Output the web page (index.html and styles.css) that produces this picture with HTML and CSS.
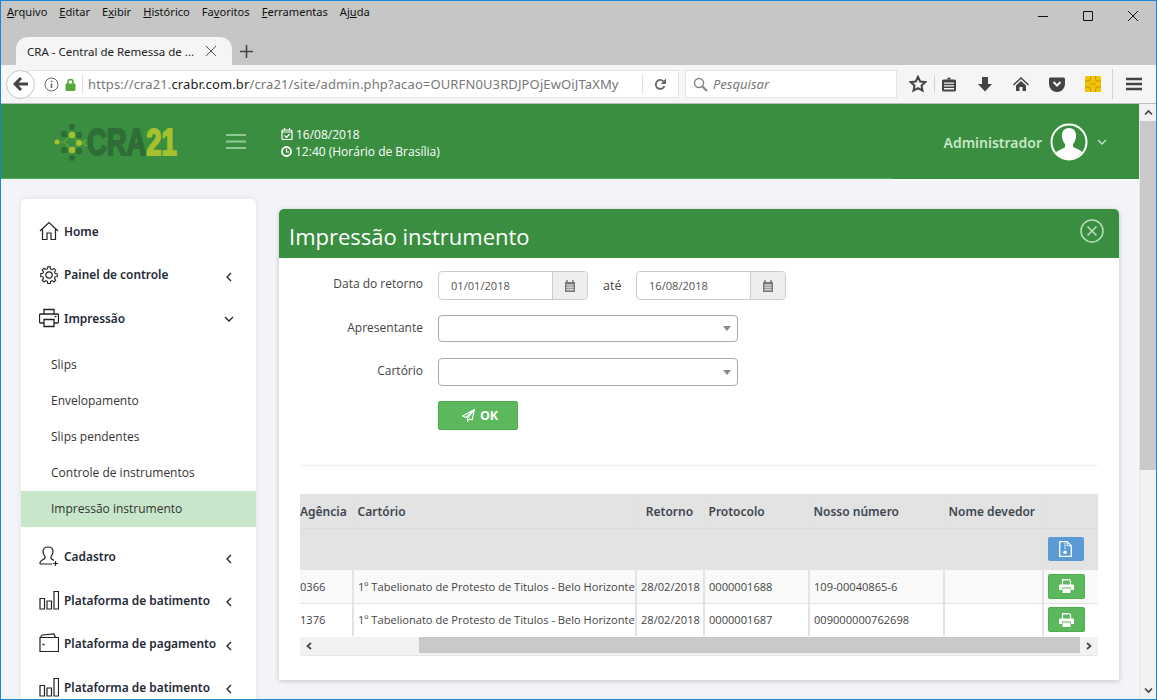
FILE: index.html
```html
<!DOCTYPE html>
<html lang="pt-BR">
<head>
    <meta charset="UTF-8">
    <title>CRA - Central de Remessa de Arquivos</title>
    <link rel="stylesheet" href="styles.css">
</head>
<body>

<div class="window">
    <!-- browser chrome -->
    <div class="menubar">
        <nav class="menus">
            <span><u>A</u>rquivo</span>
            <span><u>E</u>ditar</span>
            <span>E<u>x</u>ibir</span>
            <span><u>H</u>istórico</span>
            <span>Fa<u>v</u>oritos</span>
            <span><u>F</u>erramentas</span>
            <span>Aj<u>u</u>da</span>
        </nav>
        <div class="winctl">
            <svg width="12" height="12" viewBox="0 0 12 12"><path d="M1 6.500h10" stroke="#111" fill="none"/></svg>
            <svg width="12" height="12" viewBox="0 0 12 12"><path d="M1.500 1.500h9v9h-9z" stroke="#111" fill="none"/></svg>
            <svg width="12" height="12" viewBox="0 0 12 12"><path d="M1 1l10 10M11 1L1 11" stroke="#111" fill="none"/></svg>
        </div>
    </div>

    <div class="tabstrip">
        <div class="tab">
            <span class="tab-title">CRA - Central de Remessa de ...</span>
            <svg width="12" height="12" viewBox="0 0 12 12"><path d="M1 1l10 10M11 1L1 11" stroke="#555" fill="none"/></svg>
        </div>
        <svg class="newtab" width="13" height="13" viewBox="0 0 13 13"><path d="M6.500 0v13M0 6.500h13" stroke="#444" stroke-width="1.600" fill="none"/></svg>
    </div>

    <div class="toolbar">
        <div class="backbtn">
            <svg width="16" height="16" viewBox="0 0 16 16"><path d="M8 2L2 8l6 6M2.500 8H15" stroke="#444" stroke-width="3" fill="none"/></svg>
        </div>
        <div class="urlbar">
            <svg class="info" width="15" height="15" viewBox="0 0 15 15"><circle cx="7.500" cy="7.500" r="6.500" stroke="#666" fill="none"/><path d="M7.500 6.500v4.500M7.500 3.500v1.600" stroke="#666" stroke-width="1.500" fill="none"/></svg>
            <svg class="lock" width="11" height="13" viewBox="0 0 11 13"><path d="M3 6V4a2.500 2.500 0 015 0v2" stroke="#57a83c" stroke-width="1.600" fill="none"/><rect x="0.500" y="5.500" width="10" height="7.500" rx="1" fill="#57a83c"/></svg>
            <span class="url">https://cra21.<b>crabr.com.br</b>/cra21/site/admin.php?acao=OURFN0U3RDJPOjEwOiJTaXMy</span>
            <span class="reload">
                <svg width="13" height="13" viewBox="0 0 13 13"><path d="M10.500 8a4.500 4.500 0 11-1-4.700" stroke="#666" stroke-width="1.800" fill="none"/><path d="M12 0.500V6H6.800z" fill="#666"/></svg>
            </span>
        </div>
        <div class="searchbar">
            <svg width="15" height="15" viewBox="0 0 15 15"><circle cx="6" cy="6" r="4.500" stroke="#888" stroke-width="1.500" fill="none"/><path d="M9.500 9.500L14 14" stroke="#888" stroke-width="2.200"/></svg>
            <span>Pesquisar</span>
        </div>
        <div class="tools">
            <svg class="t-star" width="18" height="18" viewBox="0 0 18 18"><path d="M9 1.800l2.200 4.700 5.100.6-3.800 3.500 1 5.100L9 13.200l-4.500 2.500 1-5.100-3.800-3.500 5.100-.6z" stroke="#444" stroke-width="2" fill="none"/></svg>
            <i class="sep"></i>
            <svg class="t-clip" width="16" height="16" viewBox="0 0 16 16"><path d="M2.500 3.500h11a1.500 1.500 0 011.500 1.500v9a1.500 1.500 0 01-1.500 1.500h-11A1.500 1.500 0 011 14V5a1.500 1.500 0 011.500-1.500z" fill="#444"/><path d="M6 3.500a2 2 0 014 0z" fill="#444"/><path d="M3 6.500h10v1.300H3zM3 9.300h10v1.300H3zM3 12.100h10v1.300H3z" fill="#f5f5f5"/></svg>
            <svg class="t-down" width="16" height="16" viewBox="0 0 16 16"><path d="M5 1h6v7h4l-7 7.500L1 8h4z" fill="#444"/></svg>
            <svg class="t-home" width="16" height="16" viewBox="0 0 16 16"><path d="M8 1L0 8.500l1 1L8 3l7 6.500 1-1z" fill="#444"/><path d="M8 5l5 4.600V15H9.500v-4h-3v4H3V9.600z" fill="#444"/></svg>
            <svg class="t-pocket" width="16" height="16" viewBox="0 0 16 16"><path d="M1.500 1.500h13A1.500 1.500 0 0116 3v5a8 8 0 01-16 0V3a1.500 1.500 0 011.500-1.500z" fill="#444"/><path d="M4.500 6L8 9.500 11.500 6" stroke="#f5f5f5" stroke-width="2" fill="none"/></svg>
            <svg class="t-chip" width="16" height="16" viewBox="0 0 16 16"><rect width="16" height="16" rx="1.500" fill="#f4c200"/><path d="M0 5h4.500l1-3V0M0 11h4.500l1 3v2M16 5h-4.500l-1-3V0M16 11h-4.500l-1 3v2M5.500 8h5" stroke="#a98a10" stroke-width=".8" fill="none"/></svg>
            <i class="sep sep-last"></i>
            <svg class="t-menu" width="16" height="14" viewBox="0 0 16 14"><path d="M0 2h16M0 7h16M0 12h16" stroke="#444" stroke-width="2.600"/></svg>
        </div>
    </div>

    <!-- page -->
    <div class="viewport">
        <div class="page">
            <header class="topbar">
                <div class="logo">
                    <svg width="36" height="38" viewBox="0 0 36 38">
                        <path d="M3 18h7l8-7M10 18l8 8M18 11l7 8-7 7M25 19h7" stroke="#6aa63a" stroke-width="1.200" fill="none"/>
                        <g fill="#2f6d36">
                            <circle cx="18" cy="3" r="3"/><circle cx="10" cy="10" r="3.200"/><circle cx="25" cy="11" r="3.200"/>
                            <circle cx="10" cy="26" r="3.200"/><circle cx="25" cy="27" r="3.200"/><circle cx="18" cy="34" r="3"/>
                        </g>
                        <g fill="#a5c12e">
                            <circle cx="3" cy="18" r="2.500"/><circle cx="18" cy="11" r="3.200"/><circle cx="25" cy="19" r="3"/><circle cx="18" cy="26" r="3.200"/>
                        </g>
                        <circle cx="32" cy="19" r="2.600" stroke="#6aa63a" stroke-width="1.200" fill="none"/>
                    </svg>
                    <span class="logo-text">CRA<em>21</em></span>
                </div>
                <svg class="burger" width="20" height="15" viewBox="0 0 20 15"><path d="M0 1h20M0 7.500h20M0 14h20" stroke="#8fc795" stroke-width="2"/></svg>
                <div class="clock">
                    <div>
                        <svg width="12" height="12" viewBox="0 0 12 12"><rect x="1" y="2" width="10" height="9.500" rx="1" stroke="#fff" stroke-width="1.200" fill="none"/><path d="M1 4h10M3.500 0v2.500M8.500 0v2.500M3.500 7.500L5.500 9.500 8.500 6" stroke="#fff" stroke-width="1.200" fill="none"/></svg>
                        16/08/2018
                    </div>
                    <div>
                        <svg width="11" height="11" viewBox="0 0 11 11"><circle cx="5.500" cy="5.500" r="4.500" stroke="#fff" stroke-width="1.800" fill="none"/><path d="M5.500 3v3h2.500" stroke="#fff" stroke-width="1.200" fill="none"/></svg>
                        12:40 (Horário de Brasília)
                    </div>
                </div>
                <div class="user">
                    <span class="user-name">Administrador</span>
                    <svg class="avatar" width="38" height="38" viewBox="0 0 38 38">
                        <circle cx="19" cy="19" r="17.500" stroke="#fff" stroke-width="2" fill="none"/>
                        <path d="M19 5c-5 0-7.500 3.500-7 9 .3 2.500 1.200 5 3 7v3c-1.500 2-6.500 2.500-9 5.500A17 17 0 0019 36a17 17 0 0013-7c-2.500-3-7.500-3.500-9-5.500v-2.500c1.800-2 2.700-4.500 3-7 .5-5.500-2-9-7-9z" fill="#fff"/>
                    </svg>
                    <svg width="10" height="6" viewBox="0 0 10 6"><path d="M1 1l4 4 4-4" stroke="#c8e6c9" stroke-width="1.300" fill="none"/></svg>
                </div>
                <div class="progress"></div>
            </header>

            <div class="content">
                <aside class="sidebar">
                    <a class="item">
                        <svg width="20" height="20" viewBox="0 0 20 20"><path d="M1 10l9-8.500 9 8.500M3.500 8v10.500h4.500V12h4v6.500h4.500V8" stroke="#222" stroke-width="1.200" fill="none"/></svg>
                        <span>Home</span>
                    </a>
                    <a class="item">
                        <svg width="20" height="20" viewBox="0 0 20 20"><circle cx="10" cy="10" r="3.200" stroke="#222" stroke-width="1.200" fill="none"/><path d="M8.600 1h2.800l.4 2.400 1.700.7 2-1.400 2 2-1.400 2 .7 1.700 2.400.4v2.800l-2.400.4-.7 1.700 1.400 2-2 2-2-1.400-1.700.7-.4 2.400H8.600l-.4-2.400-1.700-.7-2 1.400-2-2 1.400-2-.7-1.700-2.400-.4V8.600l2.400-.4.700-1.700-1.400-2 2-2 2 1.400 1.700-.7z" stroke="#222" stroke-width="1.200" fill="none" transform="translate(1 1) scale(.9)"/></svg>
                        <span class="lift">Painel de controle</span>
                        <svg class="arrow" width="7" height="10" viewBox="0 0 7 10"><path d="M6 1L2 5l4 4" stroke="#222" stroke-width="1.300" fill="none"/></svg>
                    </a>
                    <a class="item">
                        <svg width="20" height="20" viewBox="0 0 20 20"><path d="M5 6V1.500h10V6M5 15H1.500a1 1 0 01-1-1V7a1 1 0 011-1h17a1 1 0 011 1v7a1 1 0 01-1 1H15M5 11.500h10v7H5z" stroke="#222" stroke-width="1.300" fill="none"/><path d="M15.500 8.500h2" stroke="#222" stroke-width="1.300"/></svg>
                        <span>Impressão</span>
                        <svg class="arrow arrow-open" width="10" height="7" viewBox="0 0 10 7"><path d="M1 1l4 4 4-4" stroke="#222" stroke-width="1.300" fill="none"/></svg>
                    </a>
                    <div class="submenu">
                        <a>Slips</a>
                        <a>Envelopamento</a>
                        <a>Slips pendentes</a>
                        <a>Controle de instrumentos</a>
                        <a class="active">Impressão instrumento</a>
                    </div>
                    <a class="item">
                        <svg width="20" height="20" viewBox="0 0 20 20"><path d="M1 18v-1.500c0-2 4.500-3 5-4.500v-1.500C4.500 9 4 7.500 4 5.500 4 2.500 6 1 9 1s5 1.500 5 4.500c0 2-.5 3.500-2 5V12c.3 1 1.700 1.800 3 2.400M1 18h12" stroke="#222" stroke-width="1.200" fill="none"/><path d="M16.500 15v5M14 17.500h5" stroke="#222" stroke-width="1.200"/></svg>
                        <span>Cadastro</span>
                        <svg class="arrow" width="7" height="10" viewBox="0 0 7 10"><path d="M6 1L2 5l4 4" stroke="#222" stroke-width="1.300" fill="none"/></svg>
                    </a>
                    <a class="item">
                        <svg width="20" height="20" viewBox="0 0 20 20"><path d="M1 8.500h4.500V19H1zM8 11h4.500v8H8zM15 1.500h4.500V19H15z" stroke="#222" stroke-width="1.200" fill="none"/></svg>
                        <span>Plataforma de batimento</span>
                        <svg class="arrow" width="7" height="10" viewBox="0 0 7 10"><path d="M6 1L2 5l4 4" stroke="#222" stroke-width="1.300" fill="none"/></svg>
                    </a>
                    <a class="item">
                        <svg width="20" height="20" viewBox="0 0 20 20"><path d="M1 6v12.500h18.500V4.500H1zM1 5.500L3 2l12-1 1.500 3.500" stroke="#222" stroke-width="1.200" fill="none"/><path d="M3.500 11.500h2" stroke="#222" stroke-width="1.500"/></svg>
                        <span>Plataforma de pagamento</span>
                        <svg class="arrow" width="7" height="10" viewBox="0 0 7 10"><path d="M6 1L2 5l4 4" stroke="#222" stroke-width="1.300" fill="none"/></svg>
                    </a>
                    <a class="item">
                        <svg width="20" height="20" viewBox="0 0 20 20"><path d="M1 8.500h4.500V19H1zM8 11h4.500v8H8zM15 1.500h4.500V19H15z" stroke="#222" stroke-width="1.200" fill="none"/></svg>
                        <span>Plataforma de batimento</span>
                        <svg class="arrow" width="7" height="10" viewBox="0 0 7 10"><path d="M6 1L2 5l4 4" stroke="#222" stroke-width="1.300" fill="none"/></svg>
                    </a>
                </aside>

                <main class="panel">
                    <div class="panel-head">
                        <h2>Impressão instrumento</h2>
                        <svg width="24" height="24" viewBox="0 0 24 24"><circle cx="12" cy="12" r="11" stroke="#b9dcbc" stroke-width="1.500" fill="none"/><path d="M7.500 7.500l9 9M16.500 7.500l-9 9" stroke="#b9dcbc" stroke-width="1.600" fill="none"/></svg>
                    </div>
                    <div class="panel-body">
                        <div class="form-row row-date">
                            <label>Data do retorno</label>
                            <div class="dategroup">
                                <span class="dateval">01/01/2018</span>
                                <span class="dateaddon"><svg width="12" height="12" viewBox="0 0 12 12"><path d="M1 2h10v10H1z" fill="#777"/><path d="M3 0v3M9 0v3" stroke="#777" stroke-width="1.500"/><path d="M2 5h8M2 7.300h8M2 9.600h8M4 4v7M6 4v7M8 4v7" stroke="#eee" stroke-width=".7"/></svg></span>
                            </div>
                            <span class="ate">até</span>
                            <div class="dategroup">
                                <span class="dateval">16/08/2018</span>
                                <span class="dateaddon"><svg width="12" height="12" viewBox="0 0 12 12"><path d="M1 2h10v10H1z" fill="#777"/><path d="M3 0v3M9 0v3" stroke="#777" stroke-width="1.500"/><path d="M2 5h8M2 7.300h8M2 9.600h8M4 4v7M6 4v7M8 4v7" stroke="#eee" stroke-width=".7"/></svg></span>
                            </div>
                        </div>
                        <div class="form-row row-sel1">
                            <label>Apresentante</label>
                            <div class="selectbox"><i class="caret"></i></div>
                        </div>
                        <div class="form-row row-sel2">
                            <label>Cartório</label>
                            <div class="selectbox"><i class="caret"></i></div>
                        </div>
                        <div class="form-row row-btn">
                            <label></label>
                            <button class="btn-ok">
                                <svg width="13" height="13" viewBox="0 0 13 13"><path d="M12.500.5L.5 7l3.500 1.500L12.500.5 5.500 9.500v3l2-2.500 2.500 1z" stroke="#fff" stroke-width="1.100" fill="none" stroke-linejoin="round"/></svg>
                                OK
                            </button>
                        </div>
                        <hr class="divider">

                        <div class="tablewrap">
                            <table class="grid">
                                <colgroup>
                                    <col class="c-ag"><col class="c-cart"><col class="c-ret"><col class="c-prot"><col class="c-nosso"><col class="c-nome"><col class="c-act">
                                </colgroup>
                                <thead>
                                    <tr class="headrow">
                                        <th>Agência</th><th>Cartório</th><th class="center">Retorno</th><th>Protocolo</th><th>Nosso número</th><th>Nome devedor</th><th></th>
                                    </tr>
                                    <tr class="filterrow">
                                        <th colspan="6"></th>
                                        <th>
                                            <span class="btn-icon btn-blue"><svg width="13" height="16" viewBox="0 0 12 15"><path d="M.6.6h7l3.800 3.800v10H.6z" fill="none" stroke="#fff" stroke-width="1.200"/><path d="M7.500 1v3.500h3.500" fill="none" stroke="#fff" stroke-width=".8"/><path d="M5.600 2v6" stroke="#dbe9f6" stroke-width="1.600" stroke-dasharray="1.200 .8"/><circle cx="5.600" cy="10.500" r="1.700" fill="#fff"/></svg></span>
                                        </th>
                                    </tr>
                                </thead>
                                <tbody>
                                    <tr class="odd">
                                        <td>0366</td><td>1º Tabelionato de Protesto de Titulos - Belo Horizonte</td><td>28/02/2018</td><td>0000001688</td><td>109-00040865-6</td><td></td>
                                        <td><span class="btn-icon btn-green"><svg width="15" height="14" viewBox="0 0 15 14"><path d="M3.500 6V0h6l2 2v4M3.500 1h5.500" fill="none" stroke="#fff" stroke-width="1.200"/><path d="M1 5.500h13a1 1 0 011 1V11h-3V8.500H3V11H0V6.500a1 1 0 011-1z" fill="#fff"/><path d="M3.500 9.500h8V14h-8z" fill="#fff"/></svg></span></td>
                                    </tr>
                                    <tr>
                                        <td>1376</td><td>1º Tabelionato de Protesto de Titulos - Belo Horizonte</td><td>28/02/2018</td><td>0000001687</td><td>009000000762698</td><td></td>
                                        <td><span class="btn-icon btn-green"><svg width="15" height="14" viewBox="0 0 15 14"><path d="M3.500 6V0h6l2 2v4M3.500 1h5.500" fill="none" stroke="#fff" stroke-width="1.200"/><path d="M1 5.500h13a1 1 0 011 1V11h-3V8.500H3V11H0V6.500a1 1 0 011-1z" fill="#fff"/><path d="M3.500 9.500h8V14h-8z" fill="#fff"/></svg></span></td>
                                    </tr>
                                </tbody>
                            </table>
                            <div class="hscroll">
                                <span class="hs-btn"><svg width="8" height="8" viewBox="0 0 8 8"><path d="M6 1L2.500 4 6 7" stroke="#444" stroke-width="1.700" fill="none"/></svg></span>
                                <div class="hs-track"><div class="hs-thumb"></div></div>
                                <span class="hs-btn"><svg width="8" height="8" viewBox="0 0 8 8"><path d="M2 1l3.500 3L2 7" stroke="#444" stroke-width="1.700" fill="none"/></svg></span>
                            </div>
                        </div>
                    </div>
                </main>
            </div>
        </div>

        <div class="vscroll">
            <span class="vs-btn"><svg width="9" height="7" viewBox="0 0 9 7"><path d="M1 5.500L4.500 2 8 5.500" stroke="#444" stroke-width="1.700" fill="none"/></svg></span>
            <div class="vs-track"><div class="vs-thumb"></div></div>
            <span class="vs-btn"><svg width="9" height="7" viewBox="0 0 9 7"><path d="M1 1.500L4.500 5 8 1.500" stroke="#444" stroke-width="1.700" fill="none"/></svg></span>
        </div>
    </div>
</div>

</body>
</html>
```

FILE: styles.css
```css
* { box-sizing: border-box; }
html, body { margin: 0; padding: 0; }
body { width: 1157px; height: 700px; overflow: hidden; font-family: "Open Sans", sans-serif; color: #333; }
svg { display: block; flex: none; }

.window { width: 1157px; height: 700px; border: 1px solid #1a86d8; display: flex; flex-direction: column; overflow: hidden; background: #c6c6c6; }

/* browser chrome */
.menubar { height: 36px; display: flex; justify-content: space-between; font-family: "Noto Sans", sans-serif; font-size: 11.1px; color: #111; }
.menus { display: flex; gap: 12px; padding: 3px 0 0 6px; line-height: 16px; }
.winctl { display: flex; gap: 33px; padding: 9px 17px 0 0; }

.tabstrip { height: 28px; display: flex; align-items: center; padding-left: 15px; }
.tab { width: 216px; height: 28px; background: #f5f5f5; border-radius: 12px 12px 0 0; display: flex; align-items: center; justify-content: space-between; padding: 0 15px 0 11px; font-family: "Noto Sans", sans-serif; font-size: 11.5px; color: #222; }
.tab-title { white-space: nowrap; }
.newtab { margin-left: 8px; }

.toolbar { height: 39px; background: #f5f5f5; border-bottom: 1px solid #bdbdbd; display: flex; align-items: center; padding-left: 5px; font-family: "Noto Sans", sans-serif; }
.backbtn { width: 29px; height: 29px; border-radius: 50%; border: 1px solid #c4c4c4; background: #fff; display: flex; align-items: center; justify-content: center; position: relative; z-index: 1; }
.urlbar { width: 651px; height: 28px; margin-left: -7px; background: #fff; border: 1px solid #e3e3e3; display: flex; align-items: center; padding-left: 15px; font-size: 13px; color: #777; }
.info { margin-right: 6px; }
.lock { margin-right: 6px; }
.url { flex: 1; overflow: hidden; white-space: nowrap; border-left: 1px solid #ddd; padding-left: 5px; height: 20px; line-height: 20px; letter-spacing: .12px; }
.url b { font-weight: 400; color: #222; }
.reload { width: 36px; height: 20px; border-left: 1px solid #ddd; display: flex; align-items: center; justify-content: center; background: #fff; }
.searchbar { width: 212px; height: 28px; margin-left: 6px; background: #fff; border: 1px solid #e3e3e3; display: flex; align-items: center; gap: 5px; padding-left: 7px; font-size: 13px; font-style: italic; color: #777; }
.tools { display: flex; align-items: center; margin-left: 12px; }
.sep { display: block; width: 1px; height: 18px; background: #d4d4d4; margin: 0 6px 0 7px; }
.t-down { margin-left: 20px; }
.t-home { margin-left: 20px; }
.t-pocket { margin-left: 20px; }
.t-chip { margin-left: 20px; }
.sep-last { height: 30px; margin: 0 13px 0 11px; }

/* page */
.viewport { flex: 1; display: flex; min-height: 0; background: #f2f4f8; }
.page { width: 1139px; overflow: hidden; }

.topbar { height: 75px; background: #3a8e3f; display: flex; align-items: center; padding: 0 32px 0 53px; position: relative; }
.logo { display: flex; align-items: center; width: 172px; margin-top: 2px; }
.logo-text { font-family: "Liberation Sans", sans-serif; font-weight: 700; font-size: 36px; line-height: 36px; color: #2f6d36; -webkit-text-stroke: 2px currentColor; display: inline-block; transform: scaleX(.76); transform-origin: left center; margin-left: -3px; }
.logo-text em { font-style: normal; color: #a5c12e; }
.burger { margin-right: 35px; }
.clock { color: #fff; font-size: 12px; line-height: 17px; margin-top: 2px; }
.clock div { display: flex; align-items: center; gap: 3px; }
.user { margin-left: auto; display: flex; align-items: center; }
.user-name { font-family: "Noto Sans", sans-serif; font-weight: 600; font-size: 14px; color: #c8e6c9; margin: 2px 8px 0 0; }
.avatar { margin-right: 9px; }
.progress { position: absolute; left: 0; bottom: 0; width: 892px; height: 1px; background: #4caf50; }

.content { display: flex; align-items: flex-start; padding-left: 20px; }

.sidebar { width: 235px; margin-top: 20px; padding-top: 10.5px; background: #fff; border-radius: 5px 5px 0 0; box-shadow: 0 0 6px rgba(0,0,0,.08); flex: none; }
.item { height: 43.5px; display: flex; align-items: center; padding-left: 18px; font-family: "Noto Sans", sans-serif; font-weight: 600; font-size: 11.9px; color: #1f2a36; position: relative; }
.item > svg:first-child { margin-right: 5px; }
.item .lift { margin-top: -1px; }
.arrow { position: absolute; left: 204px; top: 19px; }
.arrow-open { left: 203px; top: 19px; }
.submenu { margin: 7px 0 7.5px; }
.submenu a { display: block; height: 36px; line-height: 36px; padding-left: 30px; font-size: 12px; color: #333; }
.submenu .active { background: #c8e6c9; }

.panel { width: 840px; height: 471px; margin: 30px 0 0 23px; background: #fff; border-radius: 5px 5px 0 0; box-shadow: 0 1px 5px rgba(0,0,0,.2); flex: none; }
.panel-head { height: 49px; background: #3a8e3f; border-radius: 5px 5px 0 0; display: flex; align-items: center; justify-content: space-between; padding: 0 15px 0 10px; }
.panel-head h2 { margin: 4px 0 0; font-weight: 400; font-size: 22px; color: #fff; }
.panel-head svg { margin-top: -5px; }
.panel-body { padding: 13px 21px 0; }

.form-row { display: flex; align-items: flex-start; font-size: 12px; }
.form-row label { width: 123px; margin-right: 15px; text-align: right; padding-top: 4px; line-height: 17px; color: #444; }
.row-sel1 { margin-top: 15px; }
.row-sel2 { margin-top: 16px; }
.row-btn { margin-top: 15px; }
.dategroup { width: 150px; height: 29px; display: flex; border: 1px solid #ccc; border-radius: 4px; overflow: hidden; }
.dateval { flex: 1; padding-left: 12px; line-height: 28px; font-size: 11.1px; color: #555; }
.dateaddon { width: 35px; background: #eee; border-left: 1px solid #ccc; display: flex; align-items: center; justify-content: center; }
.ate { width: 48px; padding: 6px 0 0 15px; line-height: 17px; font-size: 12.5px; color: #444; }
.selectbox { width: 300px; height: 28px; border: 1px solid #aaa; border-radius: 4px; display: flex; align-items: center; justify-content: flex-end; padding-right: 6px; }
.row-sel1 .selectbox { height: 27px; }
.caret { border: 4px solid transparent; border-top: 5px solid #888; border-bottom: 0; }
.btn-ok { width: 80px; height: 29px; background: #5cb85c; border: 1px solid #4cae4c; border-radius: 2px; color: #fff; font-family: "Open Sans", sans-serif; font-weight: 700; font-size: 12.5px; display: flex; align-items: center; justify-content: center; gap: 5px; padding: 0 0 0 4px; }

.divider { border: 0; border-top: 1px solid #eee; margin: 35px 0 28px; }

.tablewrap { width: 798px; overflow: hidden; border-bottom: 1px solid #e8e8e8; }
.grid { border-collapse: collapse; table-layout: fixed; width: 802px; margin-left: -4px; font-size: 11.1px; color: #444; }
.c-ag { width: 57px; }
.c-cart { width: 283px; }
.c-ret { width: 68px; }
.c-prot { width: 105px; }
.c-nosso { width: 135px; }
.c-nome { width: 99px; }
.c-act { width: 55px; }
.grid th, .grid td { padding: 0 4px; border-right: 1px solid #e0e0e0; text-align: left; white-space: nowrap; overflow: hidden; }
.grid th:last-child, .grid td:last-child { border-right: 0; }
.grid td { border-right-width: 2px; border-right-color: #e3e3e3; }
.grid th.center { text-align: center; padding-right: 5px; }
.headrow th { height: 34px; padding-top: 2px; background: #e3e3e3; font-family: "Noto Sans", sans-serif; font-weight: 600; font-size: 12px; color: #3d4650; border-bottom: 1px solid #dcdcdc; }
.filterrow th { height: 42px; background: #e3e3e3; }
.filterrow th:last-child { border-left: 1px solid #f3f3f3; }
.grid tbody tr { height: 33px; border-top: 1px solid #e3e3e3; }
.grid tbody tr:first-child { border-top: 0; }
.grid .odd { background: #f9f9f9; }
.btn-icon { display: flex; align-items: center; justify-content: center; width: 37px; border-radius: 2px; }
.btn-blue { width: 36px; height: 24px; background: #5b9bd5; }
.btn-green { height: 25px; background: #5cb85c; border: 1px solid #4cae4c; }

.hscroll { height: 18px; display: flex; background: #f1f1f1; margin-top: 1px; }
.hs-btn { width: 18px; display: flex; align-items: center; justify-content: center; }
.hs-track { flex: 1; padding-left: 101px; }
.hs-thumb { width: 661px; height: 16px; background: #c9c9c9; }

.vscroll { width: 17px; background: #f1f1f1; display: flex; flex-direction: column; border-left: 1px solid #e8e8e8; }
.vs-btn { height: 17px; display: flex; align-items: center; justify-content: center; }
.vs-track { flex: 1; }
.vs-thumb { height: 349px; background: #c9c9c9; }
```
